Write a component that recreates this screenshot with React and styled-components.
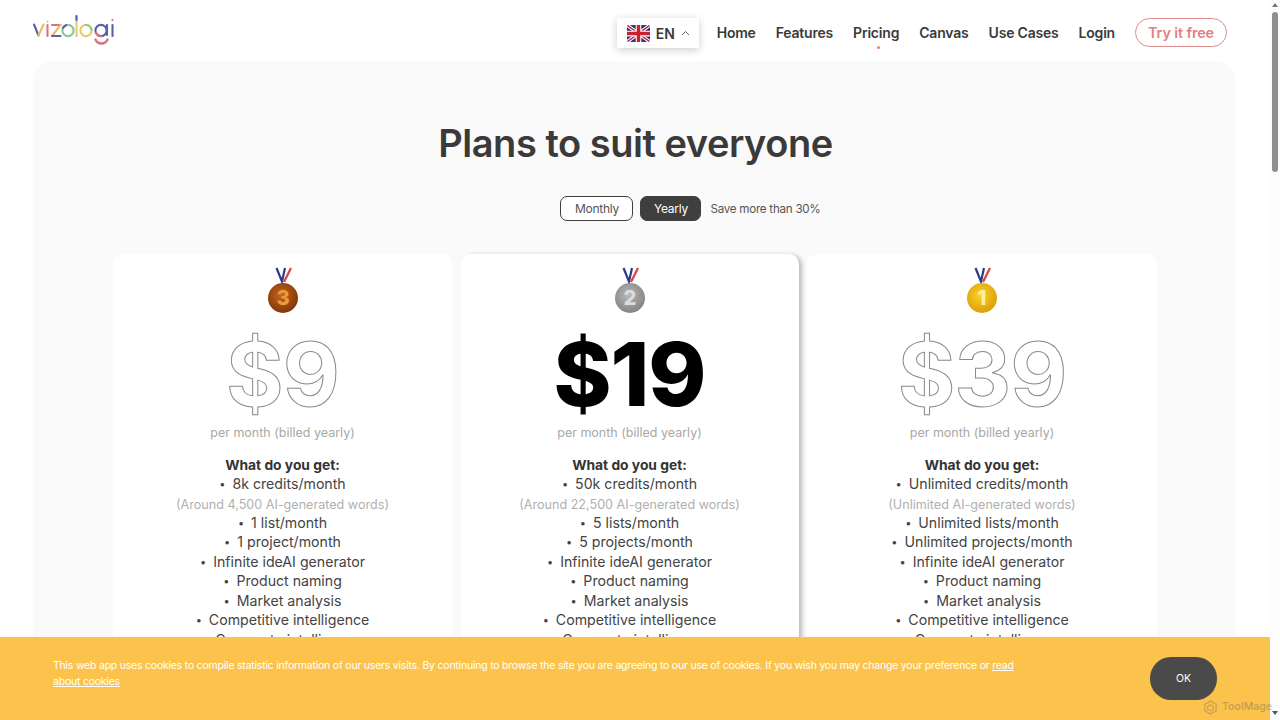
import React from "react";
import styled, { createGlobalStyle } from "styled-components";

const Global = createGlobalStyle`
  html, body { margin: 0; padding: 0; height: 100%; overflow: hidden; background: #fff; }
  body { font-family: Inter, "Noto Sans", "Liberation Sans", sans-serif; color: #3a3a3a; }
  * { box-sizing: border-box; }
`;

const Viewport = styled.div`
  position: relative; width: 1280px; height: 720px; overflow: hidden;
  display: flex; background: #fff;
`;
const Main = styled.div`
  width: 1270px; height: 720px; overflow: hidden; flex: none;
`;
const Header = styled.header`
  height: 61px; padding: 14px 43px 0 33px;
  display: flex; align-items: flex-start; justify-content: space-between;
`;
const LogoMark = styled.svg`
  width: 82px; height: 34px; display: block; flex: none;
`;
const Nav = styled.nav`
  display: flex; align-items: flex-start; padding-top: 4px;
`;
const LangButton = styled.div`
  width: 82px; height: 30px; display: flex; align-items: center; padding-left: 10px; gap: 6px;
  background: #fff; box-shadow: 0 2px 8px rgba(0,0,0,.2);
  font-size: 14px; font-weight: 600; color: #3a3a3a; margin-right: 18px;
`;
const NavLink = styled.a`
  position: relative; font-size: 14px; font-weight: 600; color: #3a3a3a; line-height: 29px;
  margin-right: 20px; letter-spacing: -0.2px; white-space: nowrap;
  ${p => p.$active && `
    &::after { content: ""; position: absolute; left: 50%; bottom: -2px; width: 3px; height: 3px;
      margin-left: 1px; border-radius: 50%; background: #e57f7f; }
  `}
`;
const TryButton = styled.a`
  width: 92px; height: 29px; display: flex; align-items: center; justify-content: center;
  border: 1.5px solid #df8c8c; border-radius: 15px; color: #e57f7f;
  font-size: 14.5px; font-weight: 600; letter-spacing: -0.15px;
`;
const Panel = styled.section`
  margin-left: 33px; width: 1203px; height: 800px; background: #fafafa;
  border-radius: 20px 20px 0 0; padding-top: 59px;
  display: flex; flex-direction: column; align-items: center;
`;
const Title = styled.h1`
  margin: 0 0 0 2px; font-size: 38px; line-height: 46px; font-weight: 600; color: #3a3a3a;
  letter-spacing: -0.47px;
`;
const Billing = styled.div`
  display: flex; align-items: center; margin: 30px 0 33px 112px; gap: 7px; height: 25px;
`;
const Toggle = styled.button`
  height: 25px; width: ${p => p.$w}px; padding: 0; border-radius: 7px; font: inherit; font-size: 12px;
  letter-spacing: -0.25px; border: 1.5px solid #3f3f3f;
  background: ${p => (p.$on ? "#3f3f3f" : "#fff")};
  color: ${p => (p.$on ? "#fff" : "#555")};
`;
const SaveNote = styled.span`
  font-size: 11.6px; letter-spacing: -0.25px; color: #555; margin-left: 2px;
`;
const Cards = styled.div`
  display: grid; grid-template-columns: 339px 338px 350px; column-gap: 8.5px; width: 1044px; margin-left: 1px;
`;
const Card = styled.article`
  background: #fff; border-radius: 10px; padding-top: 13px; height: 520px;
  display: flex; flex-direction: column; align-items: center;
  box-shadow: ${p => (p.$featured ? "3px 1px 4px rgba(0,0,0,.25)" : "none")};
`;
const MedalIcon = styled.svg`
  width: 32px; height: 48px; display: block;
`;
const Price = styled.div`
  margin-top: 12px; font-size: 88px; line-height: 94px; letter-spacing: -1px;
  font-weight: ${p => (p.$featured ? 800 : 700)};
  color: ${p => (p.$featured ? "#000" : "#fff")};
  -webkit-text-stroke: ${p => (p.$featured ? "0" : "1px #8a8a8a")};
`;
const Billed = styled.div`
  margin-top: 2px; font-size: 12.5px; line-height: 20px; color: #a8a8a8;
`;
const Features = styled.ul`
  list-style: none; margin: 13px 0 0; padding: 0; text-align: center;
  font-size: 14.15px; line-height: 19.5px; color: #444;
`;
const FeatureHead = styled.li`
  font-weight: 700; color: #333; font-size: 13.8px; margin-bottom: -1.5px;
`;
const Feature = styled.li`
  &::before { content: "•"; font-size: 11px; line-height: 1; margin-right: 7px; position: relative; top: -1px; }
`;
const FeatureNote = styled.li`
  color: #b0b0b0; font-size: 12.6px; margin: 1.5px 0 -2px;
`;
const Scrollbar = styled.div`
  width: 10px; height: 720px; flex: none; background: #fdfdfd;
  display: flex; flex-direction: column; align-items: center;
`;
const ScrollArrow = styled.svg`
  width: 6px; height: 4px; display: block; margin: 3px 0 5px; flex: none;
`;
const ScrollThumb = styled.div`
  width: 6px; height: 160px; border-radius: 3px; background: #8f8f8f; flex: none;
`;
const ScrollSpacer = styled.div`flex: 1;`;
const CookieBar = styled.div`
  position: absolute; left: 0; bottom: 0; width: 1270px; height: 83px; background: #fcc34c;
  display: flex; padding: 20px 53px 0 53px; justify-content: space-between; align-items: flex-start;
`;
const CookieText = styled.p`
  margin: 1px 0 0; width: 975px; font-size: 10.5px; line-height: 16px; color: #fff; letter-spacing: -0.22px;
  & a { color: inherit; text-decoration: underline; }
`;
const OkButton = styled.button`
  width: 67px; height: 43px; border: 0; border-radius: 21px; background: #4a4a4a; color: #fff;
  font: inherit; font-size: 10.5px; font-weight: 400;
`;
const Watermark = styled.div`
  position: absolute; left: 1203px; top: 698px; display: flex; align-items: center; gap: 4px;
  font-size: 10.5px; font-weight: 600; color: rgba(90,90,90,.35); line-height: 18px;
`;
const WatermarkIcon = styled.svg`width: 15px; height: 15px; display: block;`;

const Logo = () => (
  <LogoMark viewBox="0 0 82 34" fill="none" strokeWidth="2.1" strokeLinecap="round" role="img" aria-label="vizologi logo">
    <path d="M1 10.5 L5.5 21.5" stroke="#5a5fa8" />
    <path d="M5.5 21.5 L10.5 10.5" stroke="#e9bd5a" />
    <path d="M14.5 11 V22" stroke="#d9737a" />
    <circle cx="14.5" cy="7.5" r="1.1" fill="#e9bd5a" stroke="none" />
    <path d="M19 11 H27.5" stroke="#d9737a" />
    <path d="M27.5 11 L19 22" stroke="#e9bd5a" />
    <path d="M19 22 H27.5" stroke="#5a5fa8" />
    <circle cx="35" cy="16.5" r="5.6" stroke="#85c6a0" />
    <path d="M30 14 A5.6 5.6 0 0 1 33 11.2" stroke="#5a5fa8" />
    <path d="M43.5 2 V22" stroke="#f0c765" />
    <path d="M43.5 2 V6" stroke="#5a5fa8" />
    <circle cx="53" cy="16.5" r="5.6" stroke="#f0c765" />
    <path d="M53 11 A5.6 5.6 0 0 1 58.5 16" stroke="#85c6a0" />
    <circle cx="68" cy="16.5" r="5.6" stroke="#5a5fa8" />
    <path d="M63 19 A5.6 5.6 0 0 0 68 22" stroke="#d9737a" />
    <path d="M74 11 V21" stroke="#5a5fa8" />
    <path d="M62.5 25.5 A6.5 6.5 0 0 0 74.5 25.5" stroke="#d9737a" strokeWidth="2.4" />
    <path d="M79.5 11 V22" stroke="#5a5fa8" />
    <circle cx="79.5" cy="6" r="1.1" fill="#d9737a" stroke="none" />
  </LogoMark>
);

const Flag = () => (
  <svg width="23" height="17" viewBox="0 0 60 44" style={{ display: "block", flex: "none" }} role="img" aria-label="UK flag">
    <defs><clipPath id="fr"><rect width="60" height="44" rx="5" /></clipPath></defs>
    <g clipPath="url(#fr)">
      <rect width="60" height="44" fill="#1f2f78" />
      <path d="M0 0 L60 44 M60 0 L0 44" stroke="#fff" strokeWidth="9" />
      <path d="M0 0 L60 44 M60 0 L0 44" stroke="#c8202f" strokeWidth="3.5" />
      <path d="M30 0 V44 M0 22 H60" stroke="#fff" strokeWidth="15" />
      <path d="M30 0 V44 M0 22 H60" stroke="#c8202f" strokeWidth="9" />
    </g>
  </svg>
);

const medalColors = {
  3: { id: "m3", inner: "#c8661a", outer: "#7a3208", text: "#e89a3c" },
  2: { id: "m2", inner: "#b8b8b8", outer: "#808080", text: "#dcdcdc" },
  1: { id: "m1", inner: "#fdd32a", outer: "#d99a06", text: "#fff0a0" },
};

const Medal = ({ n }) => {
  const c = medalColors[n];
  return (
    <MedalIcon viewBox="0 0 32 48" role="img" aria-label={`medal ${n}`}>
      <defs>
        <radialGradient id={c.id} cx="45%" cy="40%" r="65%">
          <stop offset="0%" stopColor={c.inner} />
          <stop offset="100%" stopColor={c.outer} />
        </radialGradient>
      </defs>
      <path d="M9.5 1 L15 14.5 L18 1" fill="none" stroke="#2d3a8c" strokeWidth="2.2" />
      <path d="M24 1 L17 15" fill="none" stroke="#d8453e" strokeWidth="2.2" />
      <circle cx="16" cy="31" r="15" fill={`url(#${c.id})`} />
      <text x="16" y="38" textAnchor="middle" fontFamily="Inter, sans-serif" fontWeight="800" fontSize="20" fill={c.text}>{n}</text>
    </MedalIcon>
  );
};

const plans = [
  { n: 3, price: "$9", credits: "8k credits/month", note: "(Around 4,500 AI-generated words)", lists: "1 list/month", projects: "1 project/month" },
  { n: 2, price: "$19", featured: true, credits: "50k credits/month", note: "(Around 22,500 AI-generated words)", lists: "5 lists/month", projects: "5 projects/month" },
  { n: 1, price: "$39", credits: "Unlimited credits/month", note: "(Unlimited AI-generated words)", lists: "Unlimited lists/month", projects: "Unlimited projects/month" },
];

const PlanCard = ({ plan }) => (
  <Card $featured={plan.featured}>
    <Medal n={plan.n} />
    <Price $featured={plan.featured}>{plan.price}</Price>
    <Billed>per month (billed yearly)</Billed>
    <Features>
      <FeatureHead>What do you get:</FeatureHead>
      <Feature>{plan.credits}</Feature>
      <FeatureNote>{plan.note}</FeatureNote>
      <Feature>{plan.lists}</Feature>
      <Feature>{plan.projects}</Feature>
      <Feature>Infinite ideAI generator</Feature>
      <Feature>Product naming</Feature>
      <Feature>Market analysis</Feature>
      <Feature>Competitive intelligence</Feature>
      <Feature>Corporate intelligence</Feature>
    </Features>
  </Card>
);

export default function App() {
  return (
    <Viewport>
      <Global />
      <Main>
        <Header>
          <Logo />
          <Nav>
            <LangButton>
              <Flag />
              EN
              <svg width="9" height="6" viewBox="0 0 9 6" fill="none" stroke="#666" strokeWidth="1"><path d="M1 5 L4.5 1.5 L8 5" /></svg>
            </LangButton>
            <NavLink>Home</NavLink>
            <NavLink>Features</NavLink>
            <NavLink $active>Pricing</NavLink>
            <NavLink>Canvas</NavLink>
            <NavLink>Use Cases</NavLink>
            <NavLink>Login</NavLink>
            <TryButton>Try it free</TryButton>
          </Nav>
        </Header>
        <Panel>
          <Title>Plans to suit everyone</Title>
          <Billing>
            <Toggle $w={73}>Monthly</Toggle>
            <Toggle $w={61} $on>Yearly</Toggle>
            <SaveNote>Save more than 30%</SaveNote>
          </Billing>
          <Cards>
            {plans.map(p => <PlanCard key={p.n} plan={p} />)}
          </Cards>
        </Panel>
      </Main>
      <Scrollbar>
        <ScrollArrow viewBox="0 0 6 4"><path d="M3 0 L6 4 H0 Z" fill="#777" /></ScrollArrow>
        <ScrollThumb />
        <ScrollSpacer />
        <ScrollArrow viewBox="0 0 6 4"><path d="M0 0 H6 L3 4 Z" fill="#555" /></ScrollArrow>
      </Scrollbar>
      <CookieBar>
        <CookieText>
          This web app uses cookies to compile statistic information of our users visits. By continuing to browse the site you are agreeing to our use of cookies. If you wish you may change your preference or <a>read about cookies</a>
        </CookieText>
        <OkButton>OK</OkButton>
      </CookieBar>
      <Watermark>
        <WatermarkIcon viewBox="0 0 16 16" fill="none" stroke="rgba(90,90,90,.35)" strokeWidth="1.2">
          <path d="M8 1 L14 4.5 V11.5 L8 15 L2 11.5 V4.5 Z" />
          <path d="M8 5 L11 6.7 V10 L8 11.7 L5 10 V6.7 Z" />
        </WatermarkIcon>
        ToolMage
      </Watermark>
    </Viewport>
  );
}
